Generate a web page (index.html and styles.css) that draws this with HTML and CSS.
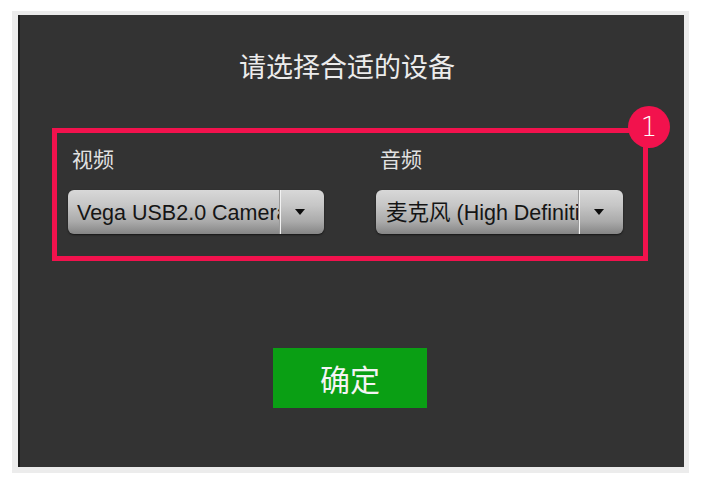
FILE: index.html
```html
<!DOCTYPE html>
<html lang="zh-CN">
<head>
<meta charset="utf-8">
<title>请选择合适的设备</title>
<link rel="stylesheet" href="styles.css">
</head>
<body>
<div class="frame">
  <div class="panel">
    <div class="title">请选择合适的设备</div>
    <div class="devices">
      <div class="col col-video">
        <div class="label">视频</div>
        <div class="select">
          <div class="value">Vega USB2.0 Camera</div>
          <div class="arrow"><span class="tri"></span></div>
        </div>
      </div>
      <div class="col col-audio">
        <div class="label">音频</div>
        <div class="select">
          <div class="value">麦克风 (High Definition Audio)</div>
          <div class="arrow"><span class="tri"></span></div>
        </div>
      </div>
      <div class="badge">1</div>
    </div>
    <div class="ok">确定</div>
  </div>
</div>
</body>
</html>
```
FILE: styles.css
```css
html, body {
  margin: 0;
  padding: 0;
  background: #ffffff;
}
body {
  padding: 11px 0 0 12px;
  font-family: "Noto Sans CJK SC", "Noto Sans", sans-serif;
}
.frame {
  width: 666px;
  height: 452px;
  padding: 4px 5px 6px 6px;
  background: #ececec;
}
.panel {
  box-sizing: border-box;
  width: 666px;
  height: 452px;
  background: #333333;
  border-left: 2px solid #1c1c1c;
  padding-top: 31px;
}
.title {
  color: #ececec;
  font-size: 27px;
  line-height: 40px;
  text-align: center;
  padding-right: 10px;
}
.devices {
  position: relative;
  box-sizing: border-box;
  width: 596px;
  height: 133px;
  margin: 42px 0 0 32px;
  border: 5px solid #f2124d;
  padding: 11px 0 0 11px;
  display: flex;
  gap: 52px;
}
.col {
  display: flex;
  flex-direction: column;
  gap: 18px;
}
.col-video { width: 256px; }
.col-audio { width: 247px; }
.label {
  color: #e2e2e2;
  font-size: 21px;
  line-height: 28px;
  padding-left: 4px;
}
.select {
  height: 44px;
  border-radius: 6px;
  background: linear-gradient(#d8d8d8 0%, #c6c6c6 35%, #aaaaaa 72%, #858585 100%);
  box-shadow: 0 1px 2px rgba(0, 0, 0, 0.6);
  display: flex;
  overflow: hidden;
}
.value {
  flex: 1;
  min-width: 0;
  overflow: hidden;
  white-space: nowrap;
  padding: 2px 0 0 9px;
  font-family: "Liberation Sans", "Noto Sans CJK SC", sans-serif;
  font-size: 21.5px;
  line-height: 42px;
  color: #151515;
}
.col-audio .value {
  padding-left: 10px;
}
.arrow {
  width: 44px;
  flex: none;
  border-left: 1px solid #f2f2f2;
  box-shadow: -1px 0 0 #9a9a9a;
  display: flex;
  align-items: center;
  padding-left: 14px;
  box-sizing: border-box;
}
.tri {
  width: 0;
  height: 0;
  border-left: 5px solid transparent;
  border-right: 5px solid transparent;
  border-top: 6px solid #0c0c0c;
}
.badge {
  position: absolute;
  top: -27px;
  right: -27px;
  width: 42px;
  height: 42px;
  border-radius: 50%;
  background: #f2124d;
  color: #ffffff;
  font-family: "DejaVu Sans", sans-serif;
  font-weight: 200;
  font-size: 26px;
  line-height: 42px;
  text-align: center;
}
.ok {
  width: 154px;
  height: 60px;
  margin: 87px 0 0 253px;
  background: #0a9f14;
  color: #f4f4f4;
  font-size: 30px;
  line-height: 60px;
  text-align: center;
}
```
